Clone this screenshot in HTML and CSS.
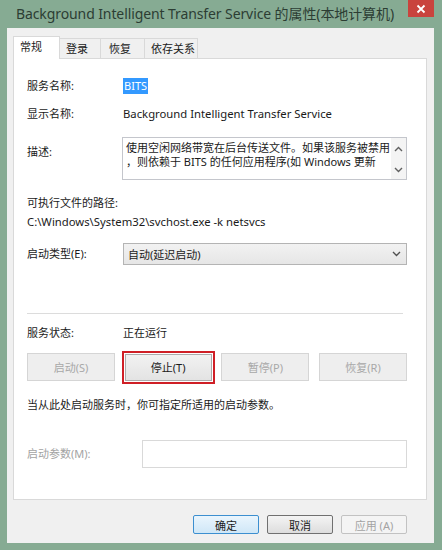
FILE: index.html
```html
<!DOCTYPE html>
<html lang="zh-CN">
<head>
<meta charset="utf-8">
<link rel="stylesheet" href="styles.css">
</head>
<body>
<div class="window">
  <div class="titlebar">
    <span class="title">Background Intelligent Transfer Service 的属性(本地计算机)</span>
    <span class="close"><svg width="10" height="10" viewBox="0 0 10 10"><path d="M1.5 1.5 L8.5 8.5 M8.5 1.5 L1.5 8.5" stroke="#fff" stroke-width="1.8" fill="none"/></svg></span>
  </div>
  <div class="client">
    <div class="tabs">
      <div class="tab active w1">常规</div>
      <div class="tab w2">登录</div>
      <div class="tab w3">恢复</div>
      <div class="tab w4">依存关系</div>
    </div>
    <div class="panel">
      <div class="row r1"><span class="label">服务名称:</span><span class="sel">BITS</span></div>
      <div class="row r2"><span class="label">显示名称:</span><span class="val lat">Background Intelligent Transfer Service</span></div>
      <div class="row r3">
        <span class="label top">描述:</span>
        <div class="desc">
          <div class="desc-text">使用空闲网络带宽在后台传送文件。如果该服务被禁用<br>，则依赖于 BITS 的任何应用程序(如 Windows 更新</div>
          <div class="vscroll">
            <svg width="9" height="6" viewBox="0 0 9 6"><path d="M1 5 L4.5 1.5 L8 5" stroke="#606060" stroke-width="1.4" fill="none"/></svg>
            <svg width="9" height="6" viewBox="0 0 9 6"><path d="M1 1 L4.5 4.5 L8 1" stroke="#606060" stroke-width="1.4" fill="none"/></svg>
          </div>
        </div>
      </div>
      <div class="line r4">可执行文件的路径:</div>
      <div class="line r5 lat">C:\Windows\System32\svchost.exe -k netsvcs</div>
      <div class="row r6">
        <span class="label">启动类型(E):</span>
        <div class="combo"><span>自动(延迟启动)</span><svg width="9" height="6" viewBox="0 0 9 6"><path d="M1 1 L4.5 4.5 L8 1" stroke="#505050" stroke-width="1.4" fill="none"/></svg></div>
      </div>
      <div class="sep"></div>
      <div class="row r7"><span class="label">服务状态:</span><span class="val">正在运行</span></div>
      <div class="svc-buttons">
        <div class="btn disabled">启动(S)</div>
        <div class="focus-ring"><div class="btn">停止(T)</div></div>
        <div class="btn disabled">暂停(P)</div>
        <div class="btn disabled">恢复(R)</div>
      </div>
      <div class="line r9">当从此处启动服务时，你可指定所适用的启动参数。</div>
      <div class="row r10">
        <span class="label wide gray">启动参数(M):</span>
        <div class="param"></div>
      </div>
    </div>
    <div class="footer">
      <div class="fbtn default">确定</div>
      <div class="fbtn">取消</div>
      <div class="fbtn off">应用 (A)</div>
    </div>
  </div>
</div>
</body>
</html>
```
FILE: styles.css
```css
* { box-sizing: border-box; }
body { margin: 0; background: #86ab93; font-family: "Noto Sans", "Noto Sans CJK SC", sans-serif; }
.window {
  width: 442px; height: 550px; background: #86ab93;
  padding: 0 8px 7px 7px; display: flex; flex-direction: column;
}
.titlebar { height: 28px; display: flex; align-items: flex-start; flex: none; }
.title { font-size: 14px; line-height: 28px; color: #2c3d33; padding-left: 9px; white-space: nowrap; letter-spacing: -0.1px; }
.close {
  margin-left: auto; width: 26px; height: 17px; background: #c9433d;
  display: flex; align-items: center; justify-content: center;
}
.client { flex: 1; background: #f0f0f0; padding: 8px 7px 0 6px; display: flex; flex-direction: column; }
.tabs { display: flex; align-items: flex-end; height: 23px; margin-bottom: -1px; position: relative; z-index: 1; }
.tab {
  height: 20px; border: 1px solid #d9d9d9; border-bottom: none; background: #f0f0f0;
  font-size: 11px; color: #1a1a1a; padding-left: 6px; line-height: 19px; margin-bottom: 1px;
}
.tab + .tab { border-left: none; }
.tab.active { height: 23px; background: #fff; line-height: 20px; margin-bottom: 0; }
.w1 { width: 47px; }
.w2 { width: 41px; }
.w3 { width: 44px; padding-left: 8px; }
.w4 { width: 53px; }
.panel {
  height: 442px; border: 1px solid #d9d9d9; background: #fff; flex: none;
  padding: 0 19px 0 13px; font-size: 11px; color: #1a1a1a;
}
.row { display: flex; align-items: center; }
.label { width: 96px; flex: none; line-height: 16px; color: #1a1a1a; }
.label.wide { width: 115px; }
.label.gray { color: #a3a3a3; }
.label.top { align-self: flex-start; padding-top: 7px; }
.val { line-height: 16px; white-space: nowrap; }
.lat { font-size: 11.3px; }
.line { line-height: 16px; height: 16px; white-space: nowrap; }
.sel { background: #3399ff; color: #fff; line-height: 16px; padding: 0 1px; }
.r1 { margin-top: 19px; height: 16px; }
.r2 { margin-top: 12px; height: 16px; }
.r3 { margin-top: 15px; height: 43px; align-items: stretch; }
.desc {
  flex: 1; margin-left: -1px; border: 1px solid #c4c6cc; display: flex; overflow: hidden;
}
.desc-text { flex: 1; padding: 3px 0 0 3px; line-height: 14px; white-space: nowrap; overflow: hidden; }
.vscroll {
  width: 15px; flex: none; background: #f4f4f4; display: flex; flex-direction: column;
  align-items: center; justify-content: space-between; padding: 8px 0 6px;
}
.r4 { margin-top: 15px; }
.r5 { margin-top: 3px; }
.r6 { margin-top: 13px; height: 22px; }
.combo {
  flex: 1; height: 22px; border: 1px solid #b4b4b4; background: linear-gradient(#f2f2f2, #e6e6e6);
  display: flex; align-items: center; justify-content: space-between; padding: 0 5px 0 4px;
}
.sep { margin-top: 48px; height: 1px; background: #dcdcdc; margin-right: 4px; }
.r7 { margin-top: 11px; height: 16px; }
.svc-buttons { margin-top: 12px; height: 28px; display: flex; justify-content: space-between; align-items: center; }
.btn {
  width: 88px; height: 28px; border: 1px solid #acacac; background: linear-gradient(#f2f2f2, #e3e3e3);
  display: flex; align-items: center; justify-content: center; font-size: 11px; color: #1a1a1a;
}
.btn.disabled { background: #eeeeee; border-color: #d5d5d5; color: #a8a8a8; }
.focus-ring { border: 2px solid #cf1f26; padding: 1px; margin: 0 -3px; }
.focus-ring .btn { width: 87px; height: 27px; }
.r9 { margin-top: 16px; }
.r10 { margin-top: 27px; height: 28px; }
.param { flex: 1; height: 28px; border: 1px solid #d9d9d9; background: #fff; }
.footer { margin-top: 15px; display: flex; justify-content: flex-end; gap: 8px; padding-right: 20px; }
.fbtn {
  width: 66px; height: 19px; border: 1px solid #707070; border-radius: 2px;
  background: linear-gradient(#f4f4f4, #dddddd); font-size: 11px; color: #1a1a1a;
  display: flex; align-items: center; justify-content: center;
}
.fbtn.default { border-color: #3c8fd0; background: linear-gradient(#eaf5fd, #cfe7f7); }
.fbtn.off { border-color: #c2c2c2; background: #f4f4f4; color: #a3a3a3; }
```
